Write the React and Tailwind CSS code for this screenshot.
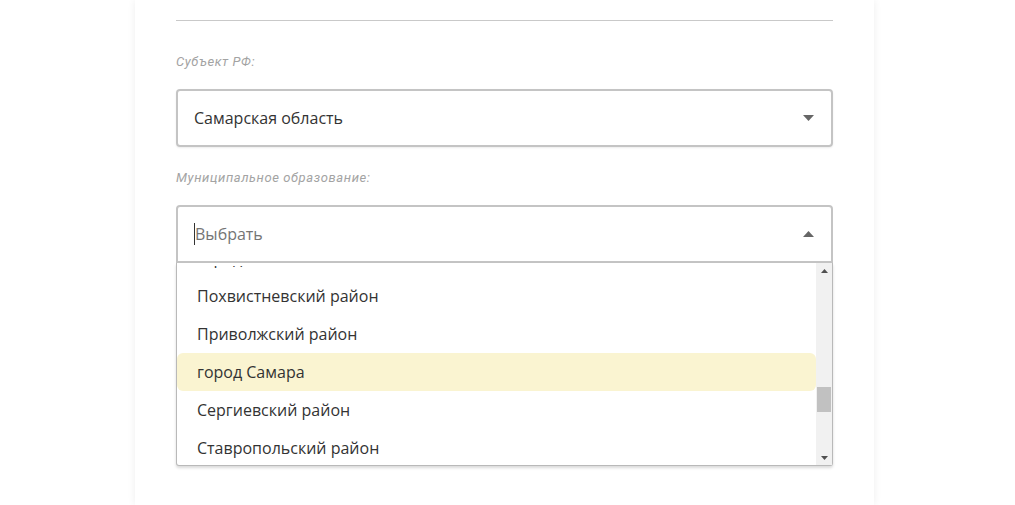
import React, { useLayoutEffect, useRef } from 'react';

const districts = [
    'Алексеевский район',
    'Безенчукский район',
    'Богатовский район',
    'Большеглушицкий район',
    'Большечерниговский район',
    'Борский район',
    'Волжский район',
    'Елховский район',
    'город Жигулевск',
    'Исаклинский район',
    'Камышлинский район',
    'город Кинель',
    'Кинельский район',
    'Кинель-Черкасский район',
    'Клявлинский район',
    'Кошкинский район',
    'Красноармейский район',
    'Красноярский район',
    'Нефтегорский район',
    'город Новокуйбышевск',
    'город Октябрьск',
    'город Отрадный',
    'Пестравский район',
    'город Похвистнево',
    'Похвистневский район',
    'Приволжский район',
    'город Самара',
    'Сергиевский район',
    'Ставропольский район',
    'город Сызрань',
    'Сызранский район',
    'город Тольятти',
    'Хворостянский район',
    'город Чапаевск',
    'Челно-Вершинский район',
    'Шенталинский район',
    'Шигонский район',
];

const ROW = 38;
const VIEW = 201;
const GAP = 3;
const SCROLL = 898 + GAP;
const ARROW = 15;
const TRACK = VIEW - ARROW * 2;

const Caret = ({ up }) => (
    <svg width="11" height="6" viewBox="0 0 11 6" className="shrink-0">
        {up ? <path d="M0 6 L5.5 0 L11 6 Z" fill="#666" /> : <path d="M0 0 L5.5 6 L11 0 Z" fill="#666" />}
    </svg>
);

const Label = ({ children, className = '' }) => (
    <div className={`h-[14px] leading-[14px] text-[13px] italic text-[#a3a3a3] tracking-[0.6px] font-['Roboto',sans-serif] ${className}`}>
        {children}
    </div>
);

export default function App() {
    const listRef = useRef(null);

    useLayoutEffect(() => {
        if (listRef.current) listRef.current.scrollTop = SCROLL;
    }, []);

    const total = districts.length * ROW;
    const thumbTop = ((SCROLL - GAP) / total) * TRACK;
    const thumbHeight = (VIEW / total) * TRACK;

    return (
        <div className="min-h-screen bg-white font-['Open_Sans',sans-serif] overflow-hidden">
            <div className="ml-[135px] w-[739px] min-h-screen bg-white shadow-[0_0_8px_rgba(0,0,0,0.07)] px-[41px] pt-[20px]">
                <div className="border-t border-[#c9c9c9]" />

                <Label className="mt-[34px]">Субъект РФ:</Label>
                <div className="mt-[20px] h-[58px] border-2 border-[#c4c4c4] rounded-[4px] shadow-[0_1px_2px_rgba(0,0,0,0.08)] flex items-center justify-between pl-[16px] pr-[17px]">
                    <span className="text-[16px] text-[#333]">Самарская область</span>
                    <Caret />
                </div>

                <Label className="mt-[24px]">Муниципальное образование:</Label>
                <div className="relative mt-[20px]">
                    <div className="h-[58px] border-2 border-[#c4c4c4] rounded-t-[4px] flex items-center justify-between pl-[16px] pr-[17px]">
                        <div className="flex items-center">
                            <span className="w-px h-[22px] bg-[#333]" />
                            <span className="text-[16px] text-[#757575]">Выбрать</span>
                        </div>
                        <Caret up />
                    </div>

                    <div className="absolute top-full left-0 right-0 h-[203px] border border-[#b9b9b9] border-t-0 rounded-b-[3px] bg-white shadow-[0_2px_3px_rgba(0,0,0,0.15)] flex">
                        <div className="flex-1 flex flex-col">
                            <div className="h-[3px] shrink-0 bg-white" />
                            <div ref={listRef} className="flex-1 overflow-hidden">
                                {districts.map((name) => (
                                    <div
                                        key={name}
                                        className={`h-[38px] flex items-center pl-[20px] text-[16px] text-[#333] rounded-[6px] ${name === 'город Самара' ? 'bg-[#faf4d1]' : ''}`}
                                    >
                                        {name}
                                    </div>
                                ))}
                            </div>
                        </div>
                        <div className="w-[16px] bg-[#f1f1f1] flex flex-col">
                            <div className="h-[15px] flex items-center justify-center">
                                <svg width="7" height="4" viewBox="0 0 7 4"><path d="M0 4 L3.5 0 L7 4 Z" fill="#505050" /></svg>
                            </div>
                            <div className="flex-1 px-[1px]">
                                <div className="bg-[#c1c1c1]" style={{ marginTop: thumbTop, height: thumbHeight }} />
                            </div>
                            <div className="h-[15px] flex items-center justify-center">
                                <svg width="7" height="4" viewBox="0 0 7 4"><path d="M0 0 L3.5 4 L7 0 Z" fill="#505050" /></svg>
                            </div>
                        </div>
                    </div>
                </div>
            </div>
        </div>
    );
}
